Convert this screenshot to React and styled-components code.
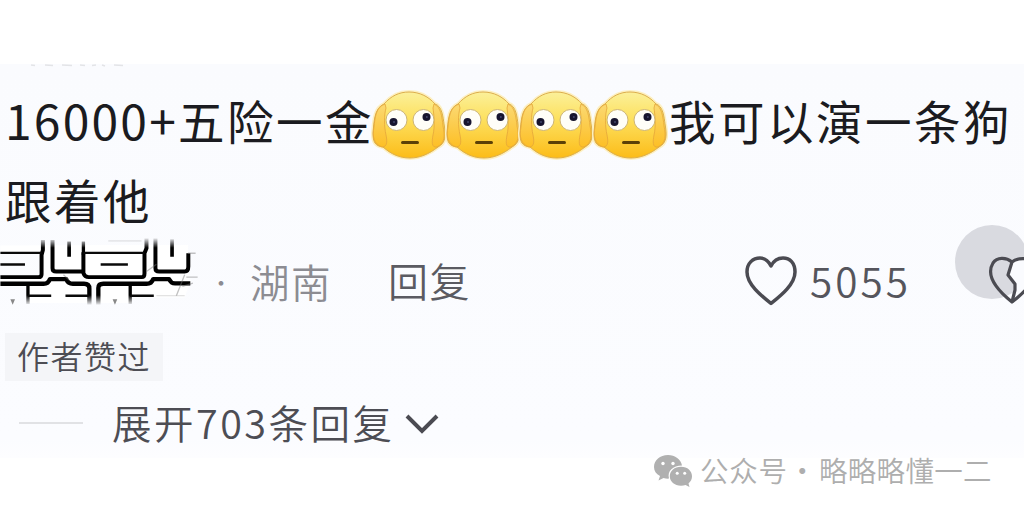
import React from "react";
import styled, { createGlobalStyle } from "styled-components";

const faces = [0, 1, 2, 3];

export default function App() {
  return (
    <CommentPage>
      <GlobalStyle />
      <CommentPanel>
        <CutOffText viewBox="0 0 140 5">
          <path
            d="M31 1l4 .5M45 1l8 .5M62 1l10 .5M80 1l5 .5M92 1.500l4 -.5M102 1l3 1M114 1l9 .5"
            stroke="#e3e4e7"
            strokeWidth="1.5"
            fill="none"
          />
        </CutOffText>
        <CommentLine>
          <CommentText $width={367}>
            <Amount>16000+</Amount>五险一金
          </CommentText>
          <EmojiGroup>
            {faces.map((face) => (
              <FaceEmoji key={face} />
            ))}
          </EmojiGroup>
          <CommentText>我可以演一条狗</CommentText>
        </CommentLine>
        <CommentLine>
          <CommentText>跟着他</CommentText>
        </CommentLine>
        <MetaRow>
          <HiddenName />
          <Separator>·</Separator>
          <Region>湖南</Region>
          <ReplyButton>回复</ReplyButton>
          <HeartIcon viewBox="0 0 54 52">
            <path d="M26 48.500C18 42 2 30 2 17C2 8 8 3 15 3C21 3 24 7 26 11C28 7 32 3 38 3C45 3 50 8 50 17C50 30 34 42 26 48.500Z" />
          </HeartIcon>
          <LikeCount>5055</LikeCount>
          <DislikeButton>
            <TouchDot />
            <BrokenHeart viewBox="0 0 36 50">
              <path
                d="M24 6C29 2 34 2 40 4V36L24 46L28 29L20 19Z"
                fill="#fafbfe"
                stroke="none"
              />
              <path d="M24 6C18 1 9 1 5 7C-1 17 4 30 24 46C31 41 36 36 42 29" />
              <path d="M24 6L20 19L27 28V34L24 46M24 6C28 2.500 33 2 40 3" />
            </BrokenHeart>
          </DislikeButton>
        </MetaRow>
        <AuthorLiked>作者赞过</AuthorLiked>
        <ExpandRow>
          <ExpandRule />
          <ExpandText>展开703条回复</ExpandText>
          <Chevron viewBox="0 0 34 20">
            <path d="M2 2L17 17L32 2" />
          </Chevron>
        </ExpandRow>
      </CommentPanel>
      <Watermark>
        <WechatIcon viewBox="0 0 38 33">
          <path d="M14 0C6 0 0 5 0 12C0 16 2 19 6 21L4.500 25.500L9.500 23C11 23.500 13 23.700 15 23.600C13 16 19 10.500 28 10.500C27 4.500 21 0 14 0Z" />
          <path d="M27 11.800C20.500 11.800 15.800 16 15.800 21.300C15.800 26.700 20.500 30.700 27 30.700C28.700 30.700 30.200 30.400 31.600 29.900L35.500 32L34.500 28.400C36.900 26.600 38 24 38 21.300C38 16 33.500 11.800 27 11.800Z" />
          <g fill="#fff">
            <circle cx="9" cy="8.500" r="1.700" />
            <circle cx="19" cy="8.500" r="1.700" />
            <circle cx="23.200" cy="18.300" r="1.500" />
            <circle cx="30.700" cy="18.300" r="1.500" />
          </g>
        </WechatIcon>
        <AccountType>公众号</AccountType>
        <WatermarkDot>·</WatermarkDot>
        <AccountName>略略略懂一二</AccountName>
      </Watermark>
    </CommentPage>
  );
}

function FaceEmoji() {
  return (
    <Face viewBox="0 0 74 70">
      <defs>
        <linearGradient id="skin" x1="0" y1="0" x2="0" y2="1">
          <stop offset="0" stopColor="#fbf09a" />
          <stop offset="0.4" stopColor="#fde160" />
          <stop offset="1" stopColor="#fcbc18" />
        </linearGradient>
        <linearGradient id="hand" x1="0" y1="0" x2="0" y2="1">
          <stop offset="0" stopColor="#fbd973" />
          <stop offset="1" stopColor="#fdbf25" />
        </linearGradient>
      </defs>
      <path
        d="M12 14C19 6 27 2 37 2C48 2 57 7 63 14C70 16 71 27 72 34C74 45 74 53 66 57C57 64 48 68 38 68C27 68 19 64 11 57C3 56 1 52 1 43C2 33 2 18 12 14Z"
        fill="none"
        stroke="#fdf0c2"
        strokeWidth="4"
      />
      <path
        d="M12 14C19 6 27 2 37 2C48 2 57 7 63 14C70 16 71 27 72 34C74 45 74 53 66 57C57 64 48 68 38 68C27 68 19 64 11 57C3 56 1 52 1 43C2 33 2 18 12 14Z"
        fill="url(#skin)"
        stroke="#dcae4c"
        strokeWidth="1"
      />
      <path
        d="M13 14C4 17 3 27 2 37C0 47 2 54 10 57C16 57 15 50 14 45C12 36 12 25 14 18Z"
        fill="url(#hand)"
        stroke="#e4a63a"
        strokeWidth="0.8"
      />
      <path
        d="M62 14C69 17 70 27 71 36C73 46 73 53 65 57C59 58 60 51 61 45C63 37 62 25 61 18Z"
        fill="url(#hand)"
        stroke="#e4a63a"
        strokeWidth="0.8"
      />
      <circle cx="24.500" cy="30" r="10.500" fill="#fffef8" stroke="#cdb577" />
      <circle cx="51.500" cy="30" r="10.500" fill="#fffef8" stroke="#cdb577" />
      <circle cx="21.500" cy="32" r="4" fill="#17152f" />
      <circle cx="54.500" cy="27" r="4" fill="#17152f" />
      <circle cx="22" cy="32" r="1" fill="#41456a" />
      <circle cx="54.800" cy="27" r="1" fill="#41456a" />
      <path d="M30.500 52.500H45.500" stroke="#5b4007" strokeWidth="3" strokeLinecap="round" />
    </Face>
  );
}

function HiddenName() {
  return (
    <ScribbledName viewBox="0 0 600 250">
      <defs>
        <linearGradient id="ink" gradientUnits="userSpaceOnUse" x1="0" y1="38" x2="0" y2="242">
          <stop offset="0" stopColor="#000" stopOpacity="0" />
          <stop offset="0.150" stopColor="#000" />
          <stop offset="0.850" stopColor="#000" />
          <stop offset="1" stopColor="#000" stopOpacity="0" />
        </linearGradient>
      </defs>
      <path
        d="M0 82H128V160H0V178H575L565 125V60H440L0 62ZM0 178H570L555 218H395V235H295V178H265V235H82V185H0Z"
        fill="#fff"
      />
      <g fill="none" stroke="url(#ink)" strokeLinejoin="round">
        <path
          strokeWidth="12"
          d="M128 45V75L124 90V148Q124 157 114 157H0M157 45V130Q157 140 168 140H250M250 82V145Q254 157 266 157H426Q434 157 434 146V85L440 70V40M467 40V130Q467 140 478 140H555Q566 140 566 125V85"
        />
        <path
          strokeWidth="13"
          d="M0 177H130Q145 177 149 163H198Q204 177 218 177H252Q268 177 268 192V240M295 240V190Q295 177 310 177H440Q456 177 460 163H508Q514 176 526 176H572"
        />
        <path strokeWidth="10" d="M83 180V238M391 180V238M250 50V90" />
        <path strokeWidth="11" d="M207 50V96M517 43V96" />
      </g>
      <path
        d="M0 84H124M250 84H434M0 119H74M302 119H384M83 213H153M196 213H266M391 213H462"
        stroke="#0a0a0a"
        strokeWidth="7"
        fill="none"
      />
      <path
        d="M440 140L470 118M530 213L555 150M190 150L207 166M565 85H588M560 157H594M548 185L580 175"
        stroke="#777"
        strokeWidth="4"
        opacity=".45"
        fill="none"
      />
      <path
        d="M325 48H425M470 213H555"
        stroke="#999"
        strokeWidth="3"
        opacity=".35"
        fill="none"
      />
      <path d="M30 224H44L37 240ZM338 224H352L345 240Z" fill="#888" />
    </ScribbledName>
  );
}

const GlobalStyle = createGlobalStyle`
  body {
    margin: 0;
    background: #ffffff;
  }
`;

const CommentPage = styled.div`
  width: 1024px;
  height: 513px;
  padding-top: 64px;
  display: flex;
  flex-direction: column;
  box-sizing: border-box;
  overflow: hidden;
  background-color: #ffffff;
  font-family: "Noto Sans CJK SC", sans-serif;
  white-space: nowrap;
`;
const CommentPanel = styled.div`
  width: 1024px;
  height: 394px;
  flex: none;
  display: flex;
  flex-direction: column;
  align-items: flex-start;
  box-sizing: border-box;
  overflow: hidden;
  background: linear-gradient(#fafbfe 0, #fbfcff 375px, #fdfdff 394px);
`;
const CutOffText = styled.svg`
  width: 140px;
  height: 5px;
  flex: none;
  margin-bottom: 11px;
`;
const CommentLine = styled.div`
  height: 79px;
  flex: none;
  display: flex;
  align-items: center;
  padding-left: 5px;
  box-sizing: border-box;
`;
const CommentText = styled.div`
  width: ${(props) => (props.$width ? `${props.$width}px` : "auto")};
  flex: none;
  color: #1b1b20;
  font-size: 46.500px;
  line-height: 79px;
  letter-spacing: 2.500px;
`;
const Amount = styled.span`
  font-size: 48px;
  letter-spacing: 2.200px;
`;
const EmojiGroup = styled.div`
  width: 297px;
  flex: none;
  display: flex;
  margin-top: 11px;
`;
const Face = styled.svg`
  width: 74px;
  height: 70px;
  flex: none;
  margin-right: -0.500px;
  overflow: visible;
`;
const MetaRow = styled.div`
  width: 100%;
  height: 92px;
  flex: none;
  display: flex;
  align-items: center;
  margin-top: -3px;
`;
const ScribbledName = styled.svg`
  width: 200px;
  height: 83px;
  flex: none;
  margin-top: -29px;
`;
const Separator = styled.div`
  width: 50px;
  flex: none;
  color: #8b8b91;
  font-size: 22px;
  text-indent: 10px;
  box-sizing: border-box;
`;
const Region = styled.div`
  width: 138px;
  flex: none;
  margin-top: -2px;
  color: #8c8c92;
  font-size: 39.500px;
  font-weight: 350;
  letter-spacing: 1.500px;
`;
const ReplyButton = styled.div`
  width: 357px;
  flex: none;
  margin-top: -2px;
  color: #5b5b62;
  font-size: 40px;
  font-weight: 350;
  letter-spacing: 1.500px;
`;
const HeartIcon = styled.svg`
  width: 54px;
  height: 52px;
  flex: none;
  fill: none;
  stroke: #4b4b52;
  stroke-width: 3.500px;
  stroke-linejoin: round;
`;
const LikeCount = styled.div`
  width: 145px;
  flex: none;
  margin-left: 11px;
  margin-top: -4px;
  color: #55555c;
  font-size: 40.500px;
  font-weight: 350;
  letter-spacing: 3px;
`;
const DislikeButton = styled.div`
  width: 69px;
  height: 76px;
  position: relative;
  flex: none;
  margin-top: -36px;
`;
const TouchDot = styled.div`
  width: 74px;
  height: 74px;
  border-radius: 50%;
  background-color: #d9dae0;
`;
const BrokenHeart = styled.svg`
  width: 36px;
  height: 50px;
  left: 33px;
  top: 31px;
  position: absolute;
  fill: none;
  stroke: #4b4b52;
  stroke-width: 3.200px;
  stroke-linejoin: round;
`;
const AuthorLiked = styled.div`
  width: 158px;
  height: 48px;
  flex: none;
  margin: 6px 0 0 5px;
  padding-left: 12px;
  box-sizing: border-box;
  background-color: #f4f5f8;
  color: #4d4d54;
  font-size: 32px;
  font-weight: 350;
  line-height: 45px;
  letter-spacing: 1.500px;
`;
const ExpandRow = styled.div`
  height: 70px;
  flex: none;
  display: flex;
  align-items: center;
  margin-top: 5px;
  padding-left: 19px;
`;
const ExpandRule = styled.div`
  width: 64px;
  height: 2px;
  margin-top: 3px;
  background-color: #e1e2e5;
`;
const ExpandText = styled.div`
  width: 293px;
  flex: none;
  margin-left: 29px;
  color: #4d4d54;
  font-size: 39.500px;
  font-weight: 350;
  letter-spacing: 2.500px;
`;
const Chevron = styled.svg`
  width: 34px;
  height: 20px;
  flex: none;
  margin-top: 6px;
  fill: none;
  stroke: #4b4b52;
  stroke-width: 4px;
`;
const Watermark = styled.div`
  height: 40px;
  flex: none;
  display: flex;
  align-items: center;
  margin: -9px 0 0 654px;
  color: #aeaeae;
  font-size: 28.500px;
  font-weight: 350;
`;
const WechatIcon = styled.svg`
  width: 38px;
  height: 33px;
  flex: none;
  margin-top: 4px;
  fill: #b0b0b0;
`;
const AccountType = styled.div`
  width: 88px;
  flex: none;
  margin-left: 8px;
  letter-spacing: 0.800px;
`;
const WatermarkDot = styled.div`
  width: 31px;
  flex: none;
`;
const AccountName = styled.div`
  flex: none;
  letter-spacing: 0.300px;
`;
